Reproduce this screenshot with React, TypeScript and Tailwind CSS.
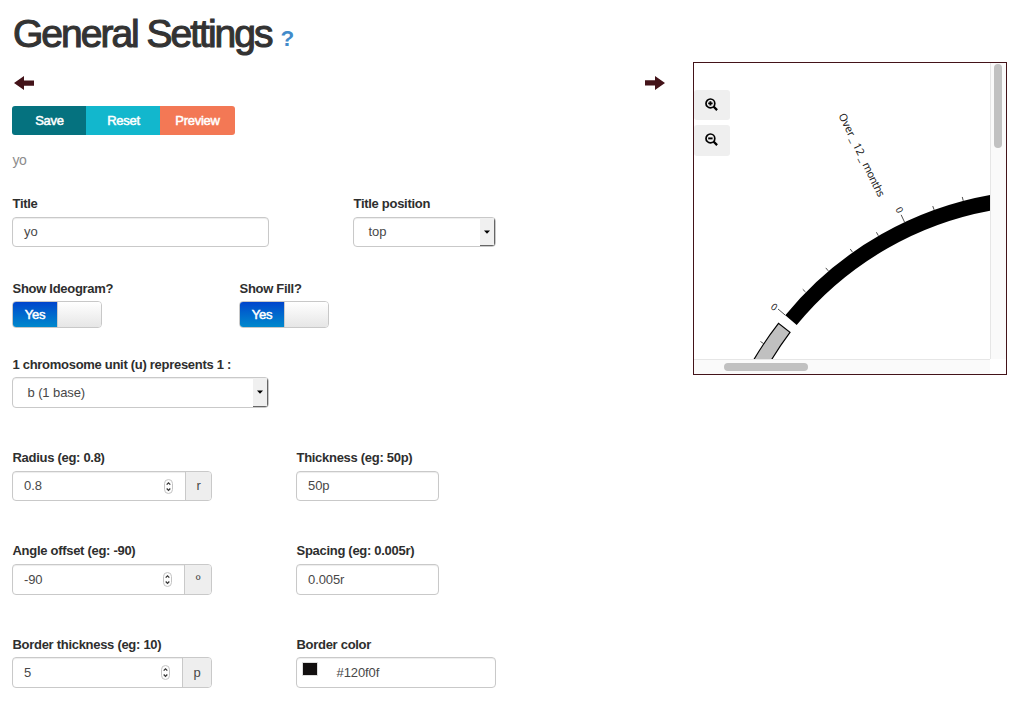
import type { ReactNode } from "react";

const CX = 1049.9;
const CY = 532.4;
const R_OUT = 342.7;
const R_IN = 327.2;

type Pt = [number, number];
const TICKS: Pt[] = [
  [805, 291.5],
  [828, 270.5],
  [852, 251.5],
  [878, 235],
  [934, 209.5],
  [963, 199.8],
];

function tickLine([x, y]: Pt, length: number) {
  const a = Math.atan2(y - CY, x - CX);
  const p = (r: number) => [CX + r * Math.cos(a), CY + r * Math.sin(a)];
  const [x1, y1] = p(R_OUT);
  const [x2, y2] = p(R_OUT + length);
  return { x1, y1, x2, y2 };
}

function Label({ children, className = "h-[23px]" }: { children: ReactNode; className?: string }) {
  return (
    <div
      className={`pl-[0.5px] text-[13px] leading-[20px] font-bold tracking-[-0.29px] whitespace-nowrap text-[#2e2e2e] ${className}`}
    >
      {children}
    </div>
  );
}

const BOX =
  "flex items-center rounded-[4px] border border-[#c9c9c9] bg-white text-[13px] tracking-[-0.1px] text-[#484848] shadow-[inset_0_1px_1px_rgba(0,0,0,0.075)]";

function TextBox({ value, className }: { value: string; className: string }) {
  return <div className={`${BOX} pl-[11px] ${className}`}>{value}</div>;
}

function Select({ value, className }: { value: string; className: string }) {
  return (
    <div className={`${BOX} justify-between overflow-hidden pl-[14px] ${className}`}>
      <span className="pl-[0.5px]">{value}</span>
      <span className="flex h-full w-[15px] items-center justify-center border-r border-b border-[#666] bg-[#f0f0f0]">
        <svg width="6" height="4" viewBox="0 0 6 4">
          <path d="M0 0.5h6L3 3.7z" fill="#000" />
        </svg>
      </span>
    </div>
  );
}

function NumberBox({ value, unit, addon, className }: { value: string; unit: string; addon: string; className: string }) {
  return (
    <div className={`${BOX} w-[200px] overflow-hidden pl-[11px] ${className}`}>
      <span className="grow">{value}</span>
      <svg className="mr-3" width="9" height="15" viewBox="0 0 9 15" fill="none">
        <rect x="0.5" y="0.5" width="8" height="14" rx="4" stroke="#c4c4c4" fill="#fdfdfd" />
        <path d="M2.7 5.7 4.5 3.8l1.8 1.9M2.7 9.5l1.8 1.9 1.8-1.9" stroke="#333" strokeWidth="1.2" />
      </svg>
      <span className={`flex h-full items-center justify-center border-l border-[#c9c9c9] bg-[#eee] ${addon}`}>{unit}</span>
    </div>
  );
}

function Toggle() {
  return (
    <div className="flex h-[27px] w-[90px] overflow-hidden rounded-[4px] border border-[#c8c8c8] bg-white text-[13px] text-white [-webkit-text-stroke:0.5px_#fff]">
      <span className="flex w-[44px] items-center justify-center bg-linear-to-b from-[#0044cc] to-[#0088cc] tracking-[-0.3px]">
        Yes
      </span>
      <span className="grow border-l border-[#ccc] bg-linear-to-b from-white to-[#e6e6e6]" />
    </div>
  );
}

function Arrow({ className = "" }: { className?: string }) {
  return (
    <svg className={className} width="20" height="14" viewBox="0 0 20 14">
      <path d="M0 7 10 0v4.4h10v5.4H10V14z" fill="#431319" />
    </svg>
  );
}

function ZoomButton({ plus, className }: { plus?: boolean; className: string }) {
  return (
    <div className={`flex w-9 items-center justify-center rounded-[3px] bg-[#efefef] ${className}`}>
      <svg className="mr-px mb-[2px]" width="13" height="13" viewBox="0 0 13 13" fill="none" stroke="#000">
        <circle cx="5.4" cy="5.4" r="4.4" strokeWidth="1.7" />
        <path d="m8.5 8.5 3.6 3.6" strokeWidth="2.3" />
        <path d={plus ? "M3.2 5.4h4.4M5.4 3.2v4.4" : "M3.2 5.4h4.4"} strokeWidth="1.9" />
      </svg>
    </div>
  );
}

function Plot() {
  return (
    <svg className="absolute top-0 left-0" width="296" height="296" viewBox="694 63 296 296">
      <path
        d={`M785.3 315.2A${R_OUT} ${R_OUT} 0 0 1 1000 193.4L1000 209.1A${R_IN} ${R_IN} 0 0 0 796.7 325.1Z`}
        fill="#000"
      />
      <path
        d={`M778.5 323.4A${R_OUT} ${R_OUT} 0 0 0 742 381.5L756 388.6A${R_IN} ${R_IN} 0 0 1 790 332.4Z`}
        fill="#c0c0c0"
        stroke="#000"
        strokeWidth="1.2"
      />
      <g stroke="#222" strokeWidth="0.8">
        {TICKS.map((t) => (
          <line key={t[0]} {...tickLine(t, 4)} />
        ))}
        <line {...tickLine([762, 342.5], 4)} />
        <line {...tickLine([904.5, 222], 8)} />
        <line x1="785.3" y1="315.2" x2="778" y2="309" />
      </g>
      <g fontFamily="'Noto Sans', sans-serif" fill="#222">
        <text fontSize="9.5" transform="translate(895.3 209) rotate(64)">0</text>
        <text fontSize="9.5" transform="translate(770 308) rotate(37)">0</text>
        <text fontSize="10.8" transform="translate(838.3 115.5) rotate(64)">
          <tspan x="0">Over</tspan>
          <tspan x="26">_</tspan>
          <tspan x="33">12</tspan>
          <tspan x="47.5">_</tspan>
          <tspan x="54.5" textLength="37">months</tspan>
        </text>
      </g>
    </svg>
  );
}

export default function App() {
  return (
    <main className="flex h-[710px] w-[1028px] overflow-hidden bg-white pl-3 font-['Liberation_Sans',Arial,sans-serif]">
      <section className="w-[681px] shrink-0">
        <h1 className="flex h-[76px] items-start pt-[11px] pl-px text-[39px] leading-[45px] tracking-[-2px] whitespace-nowrap text-[#333] [-webkit-text-stroke:1.1px_#333]">
          General Settings
          <span className="ml-[9px] pt-[5px] text-[22.5px] leading-[45px] font-bold tracking-normal text-[#428bca] [-webkit-text-stroke:0px]">
            ?
          </span>
        </h1>
        <div className="flex h-[30px] w-[653px] justify-between pl-0.5">
          <Arrow />
          <Arrow className="rotate-180" />
        </div>
        <div className="flex h-[29px] w-[223px] overflow-hidden rounded-[3px] text-[13px] tracking-[-0.25px] text-white [-webkit-text-stroke:0.5px_#fff]">
          <span className="flex w-[74px] items-center justify-center bg-[#05727f] pl-px">Save</span>
          <span className="flex w-[74px] items-center justify-center bg-[#12b7cd] pl-px">Reset</span>
          <span className="flex w-[75px] items-center justify-center bg-[#f37855]">Preview</span>
        </div>
        <p className="h-[59px] pt-[15px] pl-[0.5px] text-[14px] leading-[20px] tracking-[-0.4px] text-[#8c8c8c]">yo</p>

        <div className="flex h-[85px]">
          <div className="w-[341px]">
            <Label>Title</Label>
            <TextBox value="yo" className="h-[30px] w-[257px]" />
          </div>
          <div>
            <Label>Title position</Label>
            <Select value="top" className="h-[30px] w-[143px]" />
          </div>
        </div>

        <div className="flex h-[76px]">
          <div className="w-[227px]">
            <Label className="h-[22px]">Show Ideogram?</Label>
            <Toggle />
          </div>
          <div>
            <Label className="h-[22px]">Show Fill?</Label>
            <Toggle />
          </div>
        </div>

        <div className="h-[93px]">
          <Label className="h-[22px]">1 chromosome unit (u) represents 1 :</Label>
          <Select value="b (1 base)" className="h-[31px] w-[257px]" />
        </div>

        <div className="flex h-[93px]">
          <div className="w-[284px]">
            <Label>Radius (eg: 0.8)</Label>
            <NumberBox value="0.8" unit="r" addon="w-[26px]" className="h-[30px]" />
          </div>
          <div>
            <Label>Thickness (eg: 50p)</Label>
            <TextBox value="50p" className="h-[30px] w-[143px]" />
          </div>
        </div>

        <div className="flex h-[94px]">
          <div className="w-[284px]">
            <Label>Angle offset (eg: -90)</Label>
            <NumberBox value="-90" unit="º" addon="w-[27px]" className="h-[31px]" />
          </div>
          <div>
            <Label>Spacing (eg: 0.005r)</Label>
            <TextBox value="0.005r" className="h-[31px] w-[143px]" />
          </div>
        </div>

        <div className="flex">
          <div className="w-[284px]">
            <Label className="h-[22px]">Border thickness (eg: 10)</Label>
            <NumberBox value="5" unit="p" addon="w-[29px]" className="h-[31px]" />
          </div>
          <div>
            <Label className="h-[22px]">Border color</Label>
            <div className={`${BOX} h-[31px] w-[200px] pl-[5px]`}>
              <span className="mb-2 h-3.5 w-4 border border-[#ddd] bg-[#120f0f]" />
              <span className="ml-[18.5px]">#120f0f</span>
            </div>
          </div>
        </div>
      </section>

      <aside className="relative mt-[62px] grid h-[313px] w-[314px] grid-cols-[296px_16px] grid-rows-[296px_15px] border border-[#431319]">
        <div className="relative overflow-hidden pt-[27px]">
          <Plot />
          <ZoomButton plus className="h-[30px]" />
          <ZoomButton className="mt-[5px] h-[31px]" />
        </div>
        <div className="border-l border-[#e6e6e6] bg-[#fafafa] pt-px pl-[3px]">
          <div className="h-[84px] w-2 rounded-full bg-[#c1c1c1]" />
        </div>
        <div className="border-t border-[#e6e6e6] bg-[#fafafa] pt-[3px] pl-[30px]">
          <div className="h-2 w-[84px] rounded-full bg-[#c1c1c1]" />
        </div>
        <div className="bg-white" />
      </aside>
    </main>
  );
}
